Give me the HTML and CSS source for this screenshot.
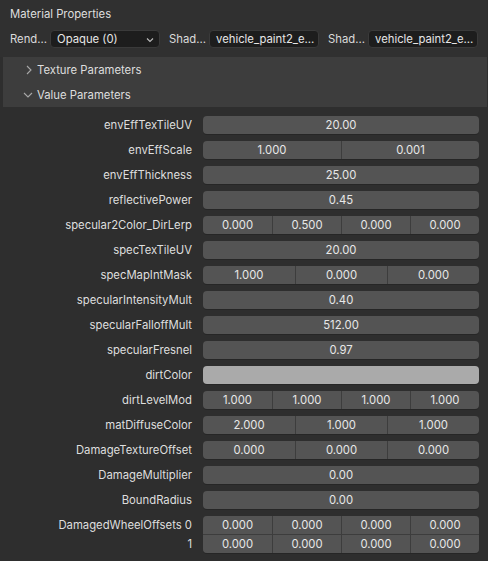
FILE: index.html
```html
<!DOCTYPE html>
<html>
<head>
<meta charset="utf-8">
<link rel="stylesheet" href="styles.css">
</head>
<body>
<div class="panel">
  <div class="top">
    <div class="title">Material Properties</div>
    <div class="selrow">
      <span class="sl">Rend...</span>
      <div class="dd dd1"><span>Opaque (0)</span>
        <svg class="chev" width="8" height="6" viewBox="0 0 8 6"><path d="M1 1.5 L4 4.5 L7 1.5" fill="none" stroke="#bdbdbd" stroke-width="1.1"/></svg>
      </div>
      <span class="sl sl2">Shad...</span>
      <div class="dd"><span>vehicle_paint2_e...</span></div>
      <span class="sl sl2">Shad...</span>
      <div class="dd"><span>vehicle_paint2_e...</span></div>
    </div>
  </div>
  <div class="subs">
    <div class="sub"><svg class="ico" width="10" height="10" viewBox="0 0 10 10"><path d="M3 1 L7 5 L3 9" fill="none" stroke="#a8a8a8" stroke-width="1.1"/></svg><span>Texture Parameters</span></div>
    <div class="sub"><svg class="ico ico2" width="10" height="10" viewBox="0 0 10 10"><path d="M1 3 L5 7 L9 3" fill="none" stroke="#a8a8a8" stroke-width="1.1"/></svg><span>Value Parameters</span></div>
  </div>
  <div class="rows">
    <div class="row"><div class="lab">envEffTexTileUV</div><div class="f c1"><div>20.00</div></div></div>
    <div class="row"><div class="lab">envEffScale</div><div class="f c2"><div>1.000</div><div>0.001</div></div></div>
    <div class="row"><div class="lab">envEffThickness</div><div class="f c1"><div>25.00</div></div></div>
    <div class="row"><div class="lab">reflectivePower</div><div class="f c1"><div>0.45</div></div></div>
    <div class="row"><div class="lab">specular2Color_DirLerp</div><div class="f c4"><div>0.000</div><div>0.500</div><div>0.000</div><div>0.000</div></div></div>
    <div class="row"><div class="lab">specTexTileUV</div><div class="f c1"><div>20.00</div></div></div>
    <div class="row"><div class="lab">specMapIntMask</div><div class="f c3"><div>1.000</div><div>0.000</div><div>0.000</div></div></div>
    <div class="row"><div class="lab">specularIntensityMult</div><div class="f c1"><div>0.40</div></div></div>
    <div class="row"><div class="lab">specularFalloffMult</div><div class="f c1"><div>512.00</div></div></div>
    <div class="row"><div class="lab">specularFresnel</div><div class="f c1"><div>0.97</div></div></div>
    <div class="row"><div class="lab">dirtColor</div><div class="f color"></div></div>
    <div class="row"><div class="lab">dirtLevelMod</div><div class="f c4"><div>1.000</div><div>1.000</div><div>1.000</div><div>1.000</div></div></div>
    <div class="row"><div class="lab">matDiffuseColor</div><div class="f c3"><div>2.000</div><div>1.000</div><div>1.000</div></div></div>
    <div class="row"><div class="lab">DamageTextureOffset</div><div class="f c3"><div>0.000</div><div>0.000</div><div>0.000</div></div></div>
    <div class="row"><div class="lab">DamageMultiplier</div><div class="f c1"><div>0.00</div></div></div>
    <div class="row"><div class="lab">BoundRadius</div><div class="f c1"><div>0.00</div></div></div>
    <div class="row grp">
      <div class="labs"><div class="lab">DamagedWheelOffsets 0</div><div class="lab">1</div></div>
      <div class="f mat">
        <div class="mrow"><div>0.000</div><div>0.000</div><div>0.000</div><div>0.000</div></div>
        <div class="mrow"><div>0.000</div><div>0.000</div><div>0.000</div><div>0.000</div></div>
      </div>
    </div>
  </div>
</div>
</body>
</html>
```

FILE: styles.css
```css
html, body {
  margin: 0;
  padding: 0;
  background: #2e2e2e;
}
body {
  width: 488px;
  height: 561px;
  overflow: hidden;
  font-family: Inter, "Noto Sans", sans-serif;
  font-size: 11.3px;
  color: #dcdcdc;
}
.panel {
  width: 488px;
  height: 561px;
  background: #2e2e2e;
  display: flex;
  flex-direction: column;
}
.top {
  background: #303030;
  height: 57px;
  width: 487px;
  box-sizing: border-box;
  padding: 0 0 0 10px;
}
.title {
  height: 28px;
  line-height: 28px;
  color: #dedede;
}
.selrow {
  display: flex;
  align-items: center;
  height: 18px;
  margin-top: 2px;
}
.sl {
  color: #dadada;
  width: 40px;
  white-space: nowrap;
}
.sl2 { margin-left: 9px; }
.dd {
  width: 110px;
  height: 18px;
  box-sizing: border-box;
  background: #1d1d1d;
  border: 1px solid #3a3a3a;
  border-radius: 4px;
  display: flex;
  align-items: center;
  padding-left: 6px;
  color: #e6e6e6;
  position: relative;
  white-space: nowrap;
  overflow: hidden;
}
.chev {
  position: absolute;
  right: 5px;
  top: 6px;
}
.subs {
  background: #3d3d3d;
  margin-left: 3px;
  width: 484px;
}
.sub {
  height: 25px;
  display: flex;
  align-items: center;
  padding-left: 19px;
  color: #dedede;
}
.ico { margin-right: 3px; margin-left: 2px; }
.ico2 { margin-left: 1px; margin-right: 4px; }
.rows {
  padding-top: 9px;
  display: flex;
  flex-direction: column;
  gap: 7px;
}
.row {
  display: flex;
  height: 18px;
  align-items: stretch;
}
.lab {
  width: 192px;
  text-align: right;
  line-height: 18px;
  color: #dedede;
  white-space: nowrap;
}
.f {
  margin-left: 11px;
  width: 276px;
  height: 18px;
  background: #545454;
  border-radius: 4px;
  box-shadow: 0 1px 0 #262626;
  display: grid;
  overflow: hidden;
  color: #e8e8e8;
}
.f > div {
  text-align: center;
  line-height: 18px;
}
.c1 { grid-template-columns: 1fr; }
.c2 { grid-template-columns: 1fr 1fr; }
.c3 { grid-template-columns: 1fr 1fr 1fr; }
.c4 { grid-template-columns: 1fr 1fr 1fr 1fr; }
.c2 > div + div, .c3 > div + div, .c4 > div + div, .mrow > div + div {
  border-left: 1px solid #3d3d3d;
}
.color {
  background: #aaaaaa;
}
.grp {
  height: 37px;
}
.labs {
  display: flex;
  flex-direction: column;
  gap: 1px;
}
.mat {
  height: 37px;
  display: flex;
  flex-direction: column;
  gap: 1px;
  background: #3d3d3d;
}
.mrow {
  display: grid;
  grid-template-columns: 1fr 1fr 1fr 1fr;
  height: 18px;
  background: #545454;
}
.mrow > div {
  text-align: center;
  line-height: 18px;
}
```
